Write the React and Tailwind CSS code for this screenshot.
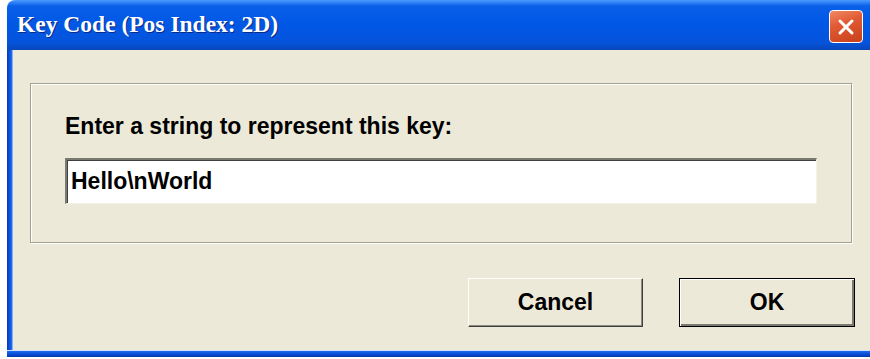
/**
 * XP-style "Key Code" dialog — title bar, etched group box with text field, Cancel/OK.
 */
export default function App() {
  return (
    <div className="w-[870px] h-[359px] bg-white overflow-hidden font-['Liberation_Sans',Arial,sans-serif]">
      <div className="ml-[7px] w-[863px] h-[357px] flex flex-col rounded-tl-[8px] overflow-hidden">
        {/* Title bar */}
        <div className="h-[50px] flex items-center justify-between pl-[10px] pr-[7px] bg-[linear-gradient(180deg,#4a9bff_0%,#0a60e8_12%,#0058e6_45%,#0654dc_85%,#0847b8_100%)]">
          <span className="font-['Liberation_Serif','Times_New_Roman',serif] font-bold text-[23.5px] leading-none text-white [text-shadow:1px_1px_0_#0b2a86]">
            Key Code (Pos Index: 2D)
          </span>
          <button className="w-[34px] h-[33px] mt-[3px] rounded-[4px] border-[1.5px] border-white flex items-center justify-center bg-[linear-gradient(160deg,#f08a64_0%,#e05a33_40%,#c9401b_100%)]">
            <svg width="20" height="20" viewBox="0 0 20 20">
              <path d="M4 4 L16 16 M16 4 L4 16" stroke="#ffffff" strokeWidth="3" strokeLinecap="round" />
            </svg>
          </button>
        </div>

        {/* Body with left frame */}
        <div className="flex flex-1">
          <div className="w-[6px] bg-[linear-gradient(90deg,#0838b8_0%,#0a4fd8_40%,#1f6cf0_80%,#cfe0ff_100%)]" />
          <div className="flex-1 flex flex-col bg-[#ece9d8]">
            {/* Group box */}
            <div className="mt-[33px] ml-[17px] mr-[18px] h-[160px] border border-[#a2a292] shadow-[inset_1px_1px_0_#ffffff,1px_1px_0_#ffffff] pl-[34px] pr-[34px] pt-[31px]">
              <div className="text-[23px] leading-[23px] font-bold text-black">
                Enter a string to represent this key:
              </div>
              <div className="mt-[20px] h-[46px] bg-white border-t-2 border-l-2 border-t-[#7a7a70] border-l-[#7a7a70] border-b border-r border-b-[#f4f2e8] border-r-[#f4f2e8] shadow-[inset_1px_1px_0_#404040] flex items-center pl-[4px]">
                <span className="text-[23px] leading-none font-bold text-black">Hello\nWorld</span>
              </div>
            </div>

            {/* Buttons */}
            <div className="mt-[35px] flex justify-end gap-[36px] pr-[15px]">
              <button className="w-[175px] h-[49px] bg-[#ece9d8] border border-t-white border-l-white border-b-[#404040] border-r-[#404040] shadow-[inset_-1px_-1px_0_#8a8a7e] text-[23px] font-bold text-black leading-none">
                Cancel
              </button>
              <button className="w-[176px] h-[49px] bg-[#ece9d8] border border-black shadow-[inset_1px_1px_0_#ffffff,inset_-2px_-2px_0_#7a7a70] text-[23px] font-bold text-black leading-none">
                OK
              </button>
            </div>
          </div>
        </div>

        {/* Bottom frame */}
        <div className="h-[1px] bg-[#cfe0ff]" />
        <div className="h-[6px] bg-[linear-gradient(180deg,#1f6cf0_0%,#0a4fd8_50%,#0838a8_100%)]" />
      </div>
    </div>
  )
}
